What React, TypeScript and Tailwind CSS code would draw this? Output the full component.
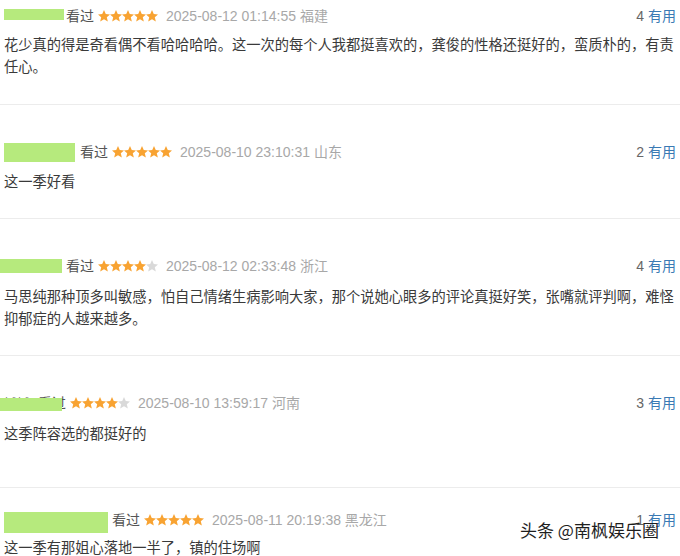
import React from "react";

type Row = {
  nameW: string;
  name: string;
  green: string;
  stars: number;
  date: string;
  loc: string;
  count: number;
  text: string;
  wrap: string;
  gap: string;
};

const rows: Row[] = [
  {
    nameW: "w-[62px]",
    name: "",
    green: "left-[4px] top-[5px] w-[60px] h-[11px]",
    stars: 5,
    date: "2025-08-12 01:14:55",
    loc: "福建",
    count: 4,
    text: "花少真的得是奇看偶不看哈哈哈哈。这一次的每个人我都挺喜欢的，龚俊的性格还挺好的，蛮质朴的，有责任心。",
    wrap: "pt-1 pb-[27px]",
    gap: "mt-[5px]",
  },
  {
    nameW: "w-[76px]",
    name: "",
    green: "left-[4px] top-[3px] w-[71px] h-[19px]",
    stars: 5,
    date: "2025-08-10 23:10:31",
    loc: "山东",
    count: 2,
    text: "这一季好看",
    wrap: "pt-[35px] pb-[26px]",
    gap: "mt-[6px]",
  },
  {
    nameW: "w-[62px]",
    name: "",
    green: "left-0 top-[5px] w-[62px] h-[14px]",
    stars: 4,
    date: "2025-08-12 02:33:48",
    loc: "浙江",
    count: 4,
    text: "马思纯那种顶多叫敏感，怕自己情绪生病影响大家，那个说她心眼多的评论真挺好笑，张嘴就评判啊，难怪抑郁症的人越来越多。",
    wrap: "pt-[35px] pb-[26px]",
    gap: "mt-[7px]",
  },
  {
    nameW: "w-[34px]",
    name: "憾憾",
    green: "left-0 top-[7px] w-[62px] h-[13px]",
    stars: 4,
    date: "2025-08-10 13:59:17",
    loc: "河南",
    count: 3,
    text: "这季阵容选的都挺好的",
    wrap: "pt-[35px] pb-[43px]",
    gap: "mt-[7px]",
  },
  {
    nameW: "w-[108px]",
    name: "",
    green: "left-[4px] top-[4px] w-[104px] h-[21px]",
    stars: 5,
    date: "2025-08-11 20:19:38",
    loc: "黑龙江",
    count: 1,
    text: "这一季有那姐心落地一半了，镇的住场啊",
    wrap: "pt-[20px] pb-0",
    gap: "mt-[4px]",
  },
];

function Star({ on }: { on: boolean }) {
  return (
    <svg width="12" height="12" viewBox="1.5 1.5 21 21" className="block">
      <path
        d="M12 1.5l3.1 7.1 7.6.6-5.8 5 1.8 7.5L12 17.7l-6.7 4 1.8-7.5-5.8-5 7.6-.6z"
        fill={on ? "#f8a332" : "#d9d9d9"}
      />
    </svg>
  );
}

export default function App() {
  return (
    <div className="relative w-[680px] h-[556px] overflow-hidden bg-white font-['Liberation_Sans','Noto_Sans_CJK_SC',sans-serif]">
      {rows.map((r, i) => (
        <div key={i} className={i < rows.length - 1 ? "border-b border-[#ececec]" : ""}>
          <div className={r.wrap}>
            <div className="relative flex items-center h-[24px] pl-1 pr-1 text-[14px]">
              <span className={`${r.nameW} shrink-0 text-[#777] text-[13px] leading-none overflow-hidden whitespace-nowrap`}>
                {r.name}
              </span>
              <span className="text-[#555]">看过</span>
              <span className="flex ml-1">
                {[0, 1, 2, 3, 4].map((k) => (
                  <Star key={k} on={k < r.stars} />
                ))}
              </span>
              <span className="ml-2 text-[#a8a8a8]">
                {r.date} {r.loc}
              </span>
              <span className="ml-auto">
                <span className="text-[#666]">{r.count} </span>
                <span className="text-[#3a7ab4]">有用</span>
              </span>
              <div className={`absolute ${r.green} bg-[#b6ea7d]`} />
            </div>
            <p className={`${r.gap} px-1 text-[14.25px] leading-[22px] text-[#3a3a3a] font-['Noto_Sans_CJK_SC',sans-serif]`}>
              {r.text}
            </p>
          </div>
        </div>
      ))}
      <div className="absolute left-[520px] top-[520px] text-[17px] leading-[20px] text-[#1e1e1e] font-['Noto_Sans_CJK_SC',sans-serif] whitespace-nowrap">
        头条 @南枫娱乐圈
      </div>
    </div>
  );
}
